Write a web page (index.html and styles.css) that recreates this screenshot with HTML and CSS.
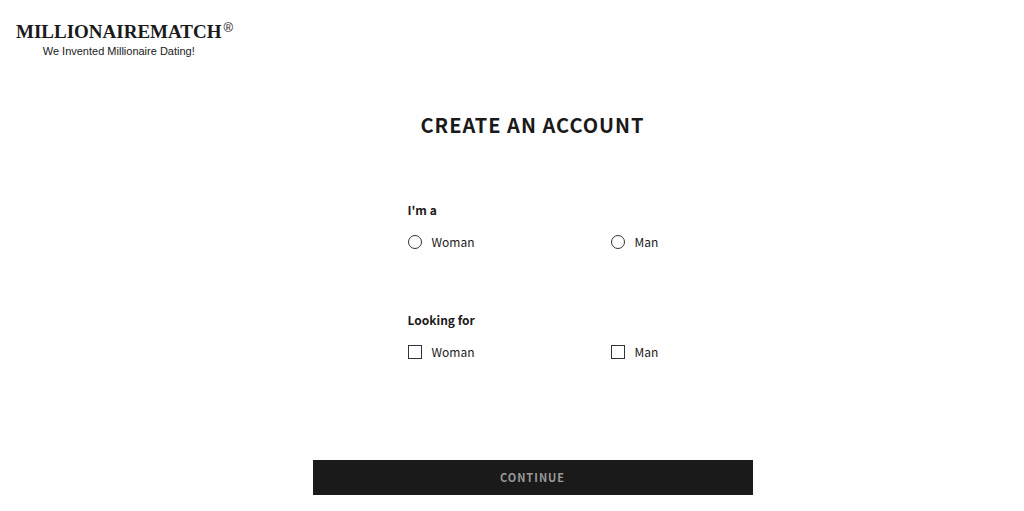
FILE: index.html
```html
<!DOCTYPE html>
<html lang="en">
<head>
<meta charset="utf-8">
<meta name="viewport" content="width=device-width, initial-scale=1">
<title>Create an account</title>
<link rel="stylesheet" href="styles.css">
</head>
<body>
<header class="header">
  <a class="brand" href="#">
    <span class="brand-text">
      <span class="brand-name">MILLIONAIREMATCH</span>
      <span class="brand-tagline">We Invented Millionaire Dating!</span>
    </span>
    <span class="brand-mark">®</span>
  </a>
</header>
<main class="main">
  <form class="form">
    <h1 class="title">CREATE AN ACCOUNT</h1>
    <div class="fields">
      <fieldset class="group">
        <legend class="group-label">I'm a</legend>
        <div class="options">
          <label class="option"><input class="control radio" type="radio" name="gender" value="woman">Woman</label>
          <label class="option"><input class="control radio" type="radio" name="gender" value="man">Man</label>
        </div>
      </fieldset>
      <fieldset class="group">
        <legend class="group-label">Looking for</legend>
        <div class="options">
          <label class="option"><input class="control" type="checkbox" name="seeking" value="woman">Woman</label>
          <label class="option"><input class="control" type="checkbox" name="seeking" value="man">Man</label>
        </div>
      </fieldset>
    </div>
    <button class="submit" type="submit">CONTINUE</button>
  </form>
</main>
</body>
</html>
```
FILE: styles.css
```css
* {
  box-sizing: border-box;
}

body {
  margin: 0;
  background: #fefefe;
  color: #1a1a1a;
  font-family: "Noto Sans CJK SC", "Noto Sans", sans-serif;
  font-size: 12px;
  line-height: 20px;
}

.header {
  display: flex;
  padding: 20px 16px 0;
}

.brand {
  display: flex;
  gap: 2px;
  color: inherit;
  text-decoration: none;
}

.brand-text {
  display: flex;
  flex-direction: column;
  align-items: center;
}

.brand-name {
  font: bold 19px/24px "Liberation Serif", serif;
}

.brand-mark {
  font: 13px/16px "Liberation Sans", sans-serif;
}

.brand-tagline {
  font: 11px/14px "Liberation Sans", sans-serif;
}

.main {
  display: flex;
  justify-content: center;
  padding: 52px 16px 16px 57px;
}

.form {
  width: 100%;
  max-width: 440px;
}

.title {
  margin: 0;
  font-size: 20px;
  line-height: 30px;
  letter-spacing: 1px;
  text-align: center;
}

.fields {
  display: grid;
  gap: 58px;
  padding: 60px 0 98px 95px;
}

.group {
  margin: 0;
  padding: 0;
  border: 0;
  min-width: 0;
}

.group-label {
  padding: 0;
  font-weight: 700;
}

.options {
  display: grid;
  grid-template-columns: 203px 1fr;
  padding-top: 12px;
}

.option {
  display: flex;
  align-items: center;
  gap: 10px;
}

.control {
  appearance: none;
  width: 14px;
  height: 14px;
  margin: 0;
  border: 1px solid #333;
  background: #fff;
}

.control:checked {
  background: #1a1a1a;
  box-shadow: inset 0 0 0 2px #fff;
}

.radio {
  border-radius: 50%;
}

.submit {
  display: block;
  width: 100%;
  padding: 7px 0 8px;
  border: 0;
  background: #1a1a1a;
  color: #999;
  font: bold 11px/20px "Noto Sans CJK SC", "Noto Sans", sans-serif;
  letter-spacing: 1px;
}
```
